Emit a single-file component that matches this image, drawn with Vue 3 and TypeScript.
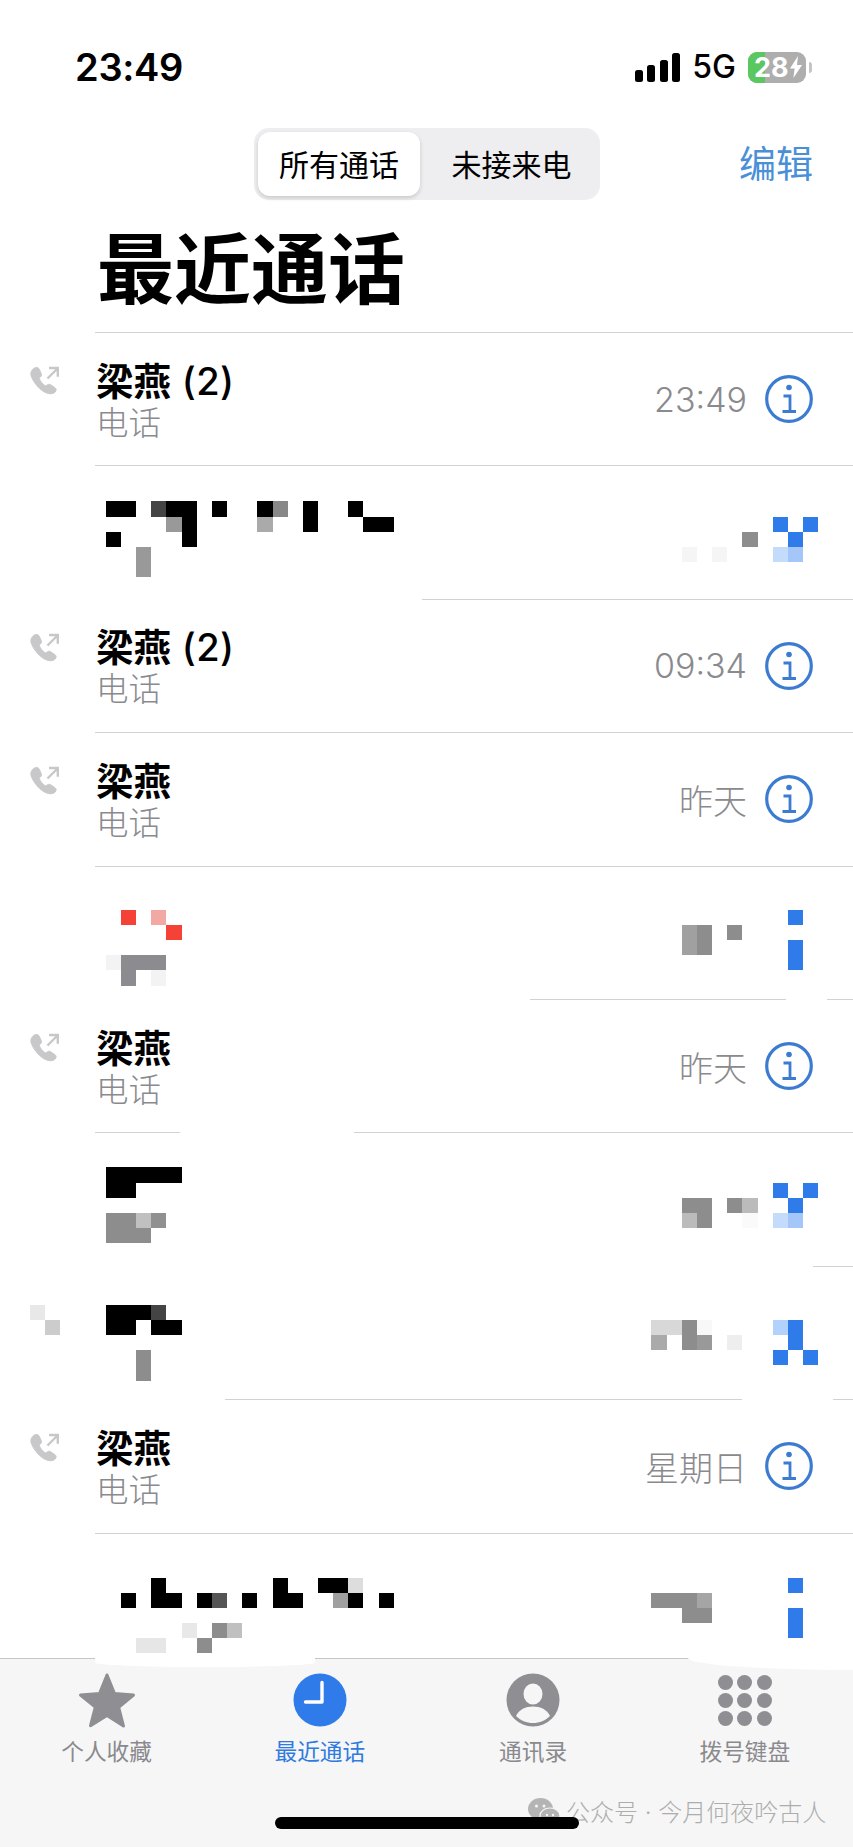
<template>
  <div class="phone">
    <div class="status">
      <span class="clock">23:49</span>
      <div class="status-right">
        <div class="signal"><i v-for="h in signalBars" :key="h" :style="{ height: h + 'px' }"></i></div>
        <span class="net">5G</span>
        <div class="battery">
          <div class="battery-fill"></div>
          <span class="battery-num">28</span>
          <svg class="bolt" viewBox="0 0 12 22" width="12" height="22"><path d="M8 0 0 12.500h4.600L3.400 22 12 9H7z" fill="#fff" /></svg>
        </div>
        <div class="battery-nub"></div>
      </div>
    </div>

    <div class="nav">
      <div class="segmented">
        <div class="seg active">所有通话</div>
        <div class="seg">未接来电</div>
      </div>
      <span class="edit">编辑</span>
    </div>

    <h1 class="title">最近通话</h1>

    <div class="list">
      <div v-for="(row, i) in rows" :key="i" class="row">
        <div class="sep">
          <i v-for="(s, j) in row.seg" :key="j" :style="segStyle(row.seg, j)"></i>
        </div>

        <div v-if="row.name" class="call">
          <svg class="call-icon" viewBox="0 0 30 30" width="30" height="30">
            <path d="M3.600 2.600c2-1.600 4.800-1.400 5.800.9l1.900 4.500c.5 1.100.1 2.100-.8 2.900l-1.400 1.300c1.300 3.200 3.500 5.900 6.500 7.900l1.900-1.300c1-.7 2.100-.7 3.100 0l4.200 2.800c1.600 1.100 1.800 3 .4 4.300-2.100 2-5.100 2.400-8.100 1.200C10.200 25.200 2.700 15.500 1 9.300.4 6.600 1.600 4.100 3.600 2.600z" fill="#c8c8ca" stroke="#c8c8ca" stroke-width="1" />
            <path d="M17.500 12.500 27 3M19 2h8.800v8.800" fill="none" stroke="#c8c8ca" stroke-width="2.400" />
          </svg>
          <div class="call-text">
            <div class="name">{{ row.name }}<span v-if="row.count" class="count"> ({{ row.count }})</span></div>
            <div class="kind">电话</div>
          </div>
          <span class="when">{{ row.when }}</span>
          <svg class="info" viewBox="0 0 48 48" width="48" height="48">
            <circle cx="24" cy="24" r="22.300" fill="none" stroke="#3c7bd2" stroke-width="3.200" />
            <circle cx="24" cy="12.500" r="2.800" fill="#3c7bd2" />
            <path d="M18.500 21H25v16M17.500 36.500h13.500" fill="none" stroke="#3c7bd2" stroke-width="2.800" />
          </svg>
        </div>

        <div v-else class="mosaic" :style="{ paddingTop: row.top + 'px' }">
          <i v-for="(c, k) in row.cells" :key="k" :style="cellStyle(c)"></i>
        </div>
      </div>
    </div>

    <div class="tabbar">
      <div class="blob blob-left"></div>
      <div class="blob blob-right"></div>

      <div class="tabs">
        <div class="tab">
          <svg viewBox="0 0 58 56" width="58" height="56"><path d="M29 3l7.500 18.500 19 1.500-14.800 12.400 4.800 18.600L29 43.500 12.500 53.600l4.800-18.600L2.500 23l19-1.500z" fill="#8e8e93" stroke="#8e8e93" stroke-width="3" stroke-linejoin="round" /></svg>
          <span>个人收藏</span>
        </div>
        <div class="tab active">
          <svg viewBox="0 0 54 54" width="54" height="54">
            <circle cx="27" cy="27" r="26.500" fill="#2f7bea" />
            <path d="M29 9.500V29H12.500" fill="none" stroke="#fff" stroke-width="3.400" stroke-linecap="round" stroke-linejoin="round" />
          </svg>
          <span>最近通话</span>
        </div>
        <div class="tab">
          <svg viewBox="0 0 54 54" width="54" height="54">
            <circle cx="27" cy="27" r="26.500" fill="#8e8e93" />
            <ellipse cx="27" cy="21" rx="9.500" ry="10.500" fill="#f6f6f7" />
            <path d="M10 43c3-6.500 9.500-9.500 17-9.500S41 36.500 44 43c-4.500 4.500-10.500 7-17 7s-12.500-2.500-17-7z" fill="#f6f6f7" />
          </svg>
          <span>通讯录</span>
        </div>
        <div class="tab dial">
          <div class="keypad"><i v-for="n in 9" :key="n"></i></div>
          <span>拨号键盘</span>
        </div>
      </div>

      <div class="watermark">
        <svg viewBox="0 0 32 26" width="32" height="26">
          <ellipse cx="12.500" cy="11" rx="12.500" ry="11" fill="#b4b4b4" />
          <ellipse cx="22" cy="18" rx="10" ry="8" fill="#b4b4b4" stroke="#f6f6f7" stroke-width="1.200" />
          <circle cx="8.500" cy="8" r="1.500" fill="#f6f6f7" />
          <circle cx="16" cy="8" r="1.500" fill="#f6f6f7" />
          <circle cx="19" cy="17" r="1.200" fill="#f6f6f7" />
          <circle cx="25" cy="17" r="1.200" fill="#f6f6f7" />
        </svg>
        <span>公众号 · 今月何夜吟古人</span>
      </div>
      <div class="home"></div>
    </div>
  </div>
</template>

<script setup lang="ts">
// [row, column, colour, column span, row span]; column 0 sits on the name's left edge
type Cell = [number, number, string, number?, number?]
type Seg = [number, number]

interface Row {
  seg: Seg[]
  name?: string
  count?: number
  when?: string
  top?: number
  cells?: Cell[]
}

const K = '#000'
const G = '#8d8d8d'
const B = '#2f7bea'

const signalBars = [12, 17, 22, 29]
const FULL: Seg[] = [[95, 853]]

const rows: Row[] = [
  { seg: FULL, name: '梁燕', count: 2, when: '23:49' },
  {
    seg: FULL, top: 35,
    cells: [
      [0, 0, K, 2], [0, 3, '#444'], [0, 4, K, 2], [0, 7, K], [0, 10, K], [0, 11, '#888'], [0, 13, K, 1, 2], [0, 16, K],
      [1, 4, '#999'], [1, 5, K, 1, 2], [1, 10, '#aaa'], [1, 17, K, 2], [2, 0, K], [3, 2, '#999', 1, 2],
      [1, 44, B], [1, 46, B], [2, 42, G], [2, 45, B],
      [3, 38, '#f5f5f5'], [3, 40, '#f5f5f5'], [3, 44, '#c5dbfb'], [3, 45, '#a5c6f9'],
    ],
  },
  { seg: [[422, 853]], name: '梁燕', count: 2, when: '09:34' },
  { seg: FULL, name: '梁燕', when: '昨天' },
  {
    seg: FULL, top: 43,
    cells: [
      [0, 1, '#f44336'], [0, 3, '#f2a9a3'], [1, 4, '#f44336'],
      [3, 0, '#f3f3f3'], [3, 1, '#8b8b90', 3], [4, 1, '#8b8b90'], [4, 3, '#f3f3f3'],
      [0, 45, B], [2, 45, B, 1, 2],
      [1, 38, '#a0a0a0', 1, 2], [1, 39, G, 1, 2], [1, 41, G],
    ],
  },
  { seg: [[530, 786], [827, 853]], name: '梁燕', when: '昨天' },
  {
    seg: [[95, 180], [354, 853]], top: 34,
    cells: [
      [0, 0, K, 5], [1, 0, K, 2],
      [3, 0, G, 2], [3, 2, '#c0c0c0'], [3, 3, '#909090'], [4, 0, G, 3],
      [1, 44, B], [1, 46, B], [2, 45, B], [3, 44, '#c5dbfb'], [3, 45, '#a5c6f9'],
      [2, 38, G, 2], [3, 38, '#bbb'], [3, 39, G], [2, 41, G], [2, 42, '#bbb'], [3, 42, '#fafafa'],
    ],
  },
  {
    seg: [[813, 853]], top: 38,
    cells: [
      [0, -5, '#e8e8e8'], [1, -4, '#ccc'],
      [0, 0, K, 3], [0, 3, '#444'], [1, 0, K, 2], [1, 3, K, 2], [3, 2, G, 1, 2],
      [1, 36, '#d8d8d8', 2], [1, 38, G], [1, 39, '#f8f8f8'], [2, 36, '#aaa'], [2, 38, G], [2, 39, '#999'], [2, 41, '#eee'],
      [1, 44, '#b3d2fb'], [1, 45, B, 1, 2], [3, 44, B], [3, 46, B],
    ],
  },
  { seg: [[225, 742], [833, 853]], name: '梁燕', when: '星期日' },
  {
    seg: FULL, top: 44,
    cells: [
      [0, 3, K], [0, 11, K], [0, 14, K, 2], [0, 16, '#ddd'],
      [1, 1, K], [1, 3, K, 2], [1, 6, K], [1, 7, '#555'], [1, 9, K], [1, 11, K, 2], [1, 15, '#a0a0a0'], [1, 16, K], [1, 18, K],
      [3, 5, '#e8e8e8'], [3, 7, G], [3, 8, '#c0c0c0'], [4, 2, '#e6e6e6', 2], [4, 6, G],
      [1, 36, G, 3], [1, 39, '#a5a5a5'], [2, 38, G, 2], [0, 45, B], [2, 45, B, 1, 2],
    ],
  },
]

function segStyle(seg: Seg[], j: number) {
  const prevEnd = j === 0 ? 0 : seg[j - 1][1]
  return { marginLeft: seg[j][0] - prevEnd + 'px', width: seg[j][1] - seg[j][0] + 'px' }
}

function cellStyle([r, c, color, cols = 1, rowsSpan = 1]: Cell) {
  return {
    gridRow: `${r + 1} / span ${rowsSpan}`,
    gridColumn: `${c + 6} / span ${cols}`,
    background: color,
  }
}
</script>

<style>
html, body { margin: 0; background: #fff; }
</style>

<style scoped>
* { box-sizing: border-box; }
i { display: block; }

.phone {
  width: 853px; height: 1847px; display: flex; flex-direction: column; overflow: hidden;
  background: #fff; color: #000;
  font-family: Inter, 'Noto Sans CJK SC', sans-serif;
}

.status { height: 100px; padding: 34px 41px 0 75px; display: flex; align-items: center; justify-content: space-between; flex-shrink: 0; }
.clock { font-size: 38px; font-weight: 600; letter-spacing: -0.3px; }
.status-right { display: flex; align-items: center; }
.signal { display: flex; align-items: flex-end; gap: 4.500px; height: 29px; margin-right: 12px; }
.signal i { width: 8px; background: #000; border-radius: 2.500px; }
.net { font-size: 32px; font-weight: 500; margin-right: 12px; line-height: 32px; }
.battery { position: relative; width: 58px; height: 31px; border-radius: 9px; background: #aeaeae; overflow: hidden; display: flex; align-items: center; padding-left: 6px; gap: 1px; }
.battery-fill { position: absolute; left: 0; top: 0; bottom: 0; width: 17px; background: #5ac85f; }
.battery-num { position: relative; color: #fff; font-size: 27px; font-weight: 700; line-height: 31px; }
.bolt { position: relative; }
.battery-nub { width: 3px; height: 11px; margin-left: 3px; border-radius: 0 3px 3px 0; background: #c4c4c4; }

.nav { height: 72px; margin-top: 28px; padding: 0 40px 0 254px; display: flex; align-items: center; justify-content: space-between; flex-shrink: 0; }
.segmented { width: 346px; height: 72px; padding: 4px 3px 4px 4px; border-radius: 15px; background: #eeeef0; display: flex; }
.seg { flex: 1; display: flex; align-items: center; justify-content: center; font-size: 30px; border-radius: 12px; padding: 0 0 3px 6px; }
.seg.active { flex: 0 0 162px; padding-left: 0; background: #fff; box-shadow: 0 2px 4px rgba(0, 0, 0, .16); }
.edit { font-size: 37px; color: #4a8fd8; margin-bottom: 4px; }

.title { margin: 0; height: 132px; padding: 28px 0 0 97px; font-size: 77px; line-height: 84px; font-weight: 700; flex-shrink: 0; }

.list { flex: 1; min-height: 0; overflow: hidden; }
.row { height: 133.400px; display: flex; flex-direction: column; }
.sep { height: 1px; display: flex; flex-shrink: 0; }
.sep i { background: #d2d2d4; }

.call { flex: 1; display: flex; align-items: center; padding: 0 40px 0 30px; }
.call-icon { align-self: flex-start; margin-top: 33px; margin-right: 35px; flex-shrink: 0; }
.call-text { flex: 1; padding-top: 6px; padding-left: 1px; }
.name { font-size: 37.500px; font-weight: 700; line-height: 43px; }
.count { font-weight: 500; font-size: 38px; letter-spacing: 0.500px; }
.kind { font-size: 32.500px; font-weight: 300; line-height: 42px; color: #8a8a8e; }
.when { font-size: 34px; font-weight: 300; color: #8a8a8e; margin-right: 18px; }

.mosaic { display: grid; grid-template-columns: repeat(54, 15.170px); grid-template-rows: repeat(5, 15.200px); padding-left: 30px; }

.tabbar { position: relative; height: 189px; flex-shrink: 0; background: #f6f6f7; border-top: 1px solid #c6c6c8; }
.blob { position: absolute; top: -1px; background: #fff; }
.blob-left { left: 95px; width: 220px; height: 9px; border-radius: 0 0 50% 50%; }
.blob-right { left: 688px; width: 165px; height: 12px; border-bottom-left-radius: 100%; }

.tabs { display: grid; grid-template-columns: repeat(4, 1fr); padding-top: 13px; }
.tab { display: flex; flex-direction: column; align-items: center; height: 100px; font-size: 22.700px; line-height: 30px; color: #8a8a8e; }
.tab svg, .keypad { height: 56px; flex-shrink: 0; margin-bottom: 9px; }
.tab.active { color: #2f7be0; }
.tab.dial { padding-right: 3px; }
.keypad { width: 54px; margin-top: 3px; height: 51px; margin-bottom: 11px; display: grid; grid-template-columns: repeat(3, 15px); grid-auto-rows: 15px; justify-content: space-between; align-content: space-between; }
.keypad i { background: #8e8e93; border-radius: 50%; }

.watermark { position: absolute; left: 528px; top: 134px; display: flex; align-items: center; gap: 6px; color: #adadad; font-size: 24px; font-weight: 300; white-space: nowrap; }
.home { position: absolute; left: 275px; top: 158px; width: 304px; height: 12px; border-radius: 6px; background: #000; }
</style>
